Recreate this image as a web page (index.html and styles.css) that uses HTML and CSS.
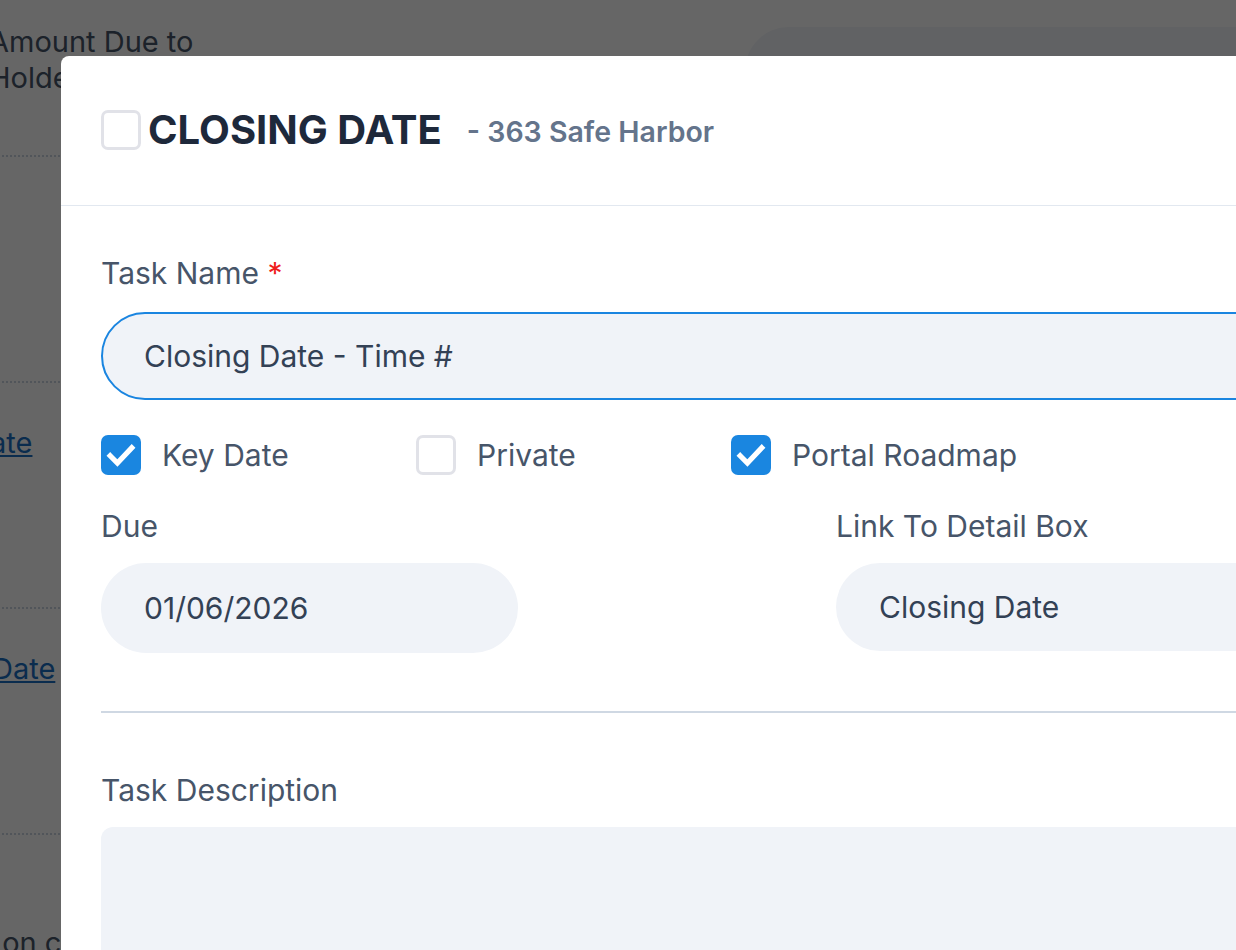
FILE: index.html
```html
<!DOCTYPE html>
<html lang="en">
<head>
    <meta charset="UTF-8">
    <meta name="viewport" content="width=device-width, initial-scale=1.0">
    <title>Closing Date - 363 Safe Harbor</title>
    <link rel="stylesheet" href="styles.css">
</head>
<body>
    <!-- transaction page behind the task dialog -->
    <div class="page">
        <div class="page-fields">
            <div class="field-row first">
                <span class="field-label">Amount Due to Holder</span>
            </div>
            <div class="field-row"></div>
            <div class="field-row">
                <a class="field-link link-key" href="#">Key Date</a>
            </div>
            <div class="field-row">
                <a class="field-link link-closing" href="#">Closing Date</a>
            </div>
            <div class="field-row last">
                <span class="field-label note-due">Due on closing</span>
            </div>
        </div>
        <div class="page-side">
            <div class="side-label">Amount Due from Buyer at Closing</div>
            <div class="side-box"></div>
        </div>
    </div>

    <div class="overlay"></div>

    <div class="modal">
        <div class="modal-header">
            <span class="check-box"></span>
            <h1 class="modal-title">CLOSING DATE</h1>
            <span class="modal-sub">- 363 Safe Harbor</span>
        </div>

        <div class="modal-body">
            <div class="field-title">Task Name <span class="req">*</span></div>
            <div class="text-input focused">Closing Date - Time #</div>

            <div class="options">
                <label class="option">
                    <span class="check-box checked">
                        <svg viewBox="0 0 20 20" width="40" height="40"><path d="M4.6 10.4l3.6 3.6 7.2-7.6" fill="none" stroke="#fff" stroke-width="2.6" stroke-linecap="square"/></svg>
                    </span>
                    Key Date
                </label>
                <label class="option">
                    <span class="check-box"></span>
                    Private
                </label>
                <label class="option">
                    <span class="check-box checked">
                        <svg viewBox="0 0 20 20" width="40" height="40"><path d="M4.6 10.4l3.6 3.6 7.2-7.6" fill="none" stroke="#fff" stroke-width="2.6" stroke-linecap="square"/></svg>
                    </span>
                    Portal Roadmap
                </label>
            </div>

            <div class="two-col">
                <div>
                    <div class="field-title">Due</div>
                    <div class="text-input date">01/06/2026</div>
                </div>
                <div>
                    <div class="field-title">Link To Detail Box</div>
                    <div class="text-input">Closing Date</div>
                </div>
            </div>

            <hr class="divider">

            <div class="field-title">Task Description</div>
            <div class="text-area"></div>
        </div>
    </div>
</body>
</html>
```

FILE: styles.css
```css
body {
    font-family: Inter, "Noto Sans", sans-serif;
    margin: 0;
    padding: 0;
    background-color: #fff;
    overflow: hidden;
    height: 950px;
}

/* page underneath */
.page {
    display: flex;
    margin-top: -30px;
}
.page-fields {
    margin-left: -11px;
    width: 215px;
    flex-shrink: 0;
    font-size: 29px;
    line-height: 36px;
    color: #475569;
}
.field-row {
    box-sizing: border-box;
    height: 226px;
    padding-top: 42px;
    border-bottom: 2px dotted #cbd5e1;
}
.field-row.first {
    height: 187px;
    padding-top: 54px;
}
.field-row.last {
    padding-top: 90px;
    border-bottom: none;
}
.field-link {
    display: inline-block;
    color: #1b6fc2;
    text-decoration: underline;
    white-space: nowrap;
}
.link-key {
    margin-left: -79px;
}
.link-closing {
    margin-left: -108px;
}
.note-due {
    display: inline-block;
    margin-left: -50px;
    white-space: nowrap;
}
.page-side {
    margin-left: 541px;
    flex: 1;
}
.side-label {
    font-size: 26px;
    line-height: 30px;
    color: #475569;
    padding-left: 30px;
    white-space: nowrap;
}
.side-box {
    margin-top: 27px;
    height: 120px;
    background-color: #f2f5fa;
    border-radius: 44px 0 0 44px;
}

.overlay {
    position: fixed;
    inset: 0;
    background-color: rgba(0, 0, 0, 0.6);
}

/* task dialog */
.modal {
    position: fixed;
    left: 61px;
    top: 56px;
    width: 1510px;
    height: 1100px;
    background-color: #fff;
    border-radius: 8px;
}
.modal-header {
    display: flex;
    align-items: center;
    padding: 54px 40px 55px;
    border-bottom: 1px solid #e2e8f0;
    height: 40px;
}
.modal-title {
    margin: 0 0 0 7px;
    font-size: 40px;
    font-weight: 700;
    letter-spacing: 0;
    color: #1e293b;
    line-height: 40px;
}
.modal-sub {
    margin-left: 25px;
    margin-top: 2px;
    font-size: 28.5px;
    font-weight: 600;
    color: #64748b;
}
.modal-body {
    padding: 48px 40px;
}
.field-title {
    font-size: 30px;
    line-height: 38px;
    color: #475569;
    margin-bottom: 20px;
}
.req {
    color: #ef1c1c;
}
.text-input {
    box-sizing: border-box;
    height: 88px;
    display: flex;
    align-items: center;
    padding: 0 43px;
    border-radius: 44px;
    background-color: #f0f3f8;
    font-size: 30px;
    color: #334155;
}
.text-input.focused {
    border: 2px solid #1a85e0;
    padding: 0 41px;
}
.text-input.date {
    width: 417px;
    height: 90px;
    border-radius: 45px;
}

.check-box {
    box-sizing: border-box;
    width: 40px;
    height: 40px;
    flex-shrink: 0;
    border: 3px solid #e1e2e8;
    border-radius: 7px;
    background-color: #fff;
}
.check-box.checked {
    border: none;
    background-color: #1a86e0;
}
.check-box svg {
    display: block;
}

.options {
    display: grid;
    grid-template-columns: 315px 315px auto;
    margin-top: 35px;
}
.option {
    display: flex;
    align-items: center;
    gap: 21px;
    font-size: 30px;
    color: #475569;
    height: 40px;
}

.two-col {
    display: grid;
    grid-template-columns: 695px 695px;
    column-gap: 40px;
    margin-top: 32px;
}
.two-col .field-title {
    margin-bottom: 18px;
}

.divider {
    border: none;
    height: 2px;
    background-color: #cfd8e3;
    margin: 58px 0 58px;
}
.text-area {
    margin-top: -2px;
    height: 320px;
    border-radius: 12px;
    background-color: #f0f3f8;
}
```
